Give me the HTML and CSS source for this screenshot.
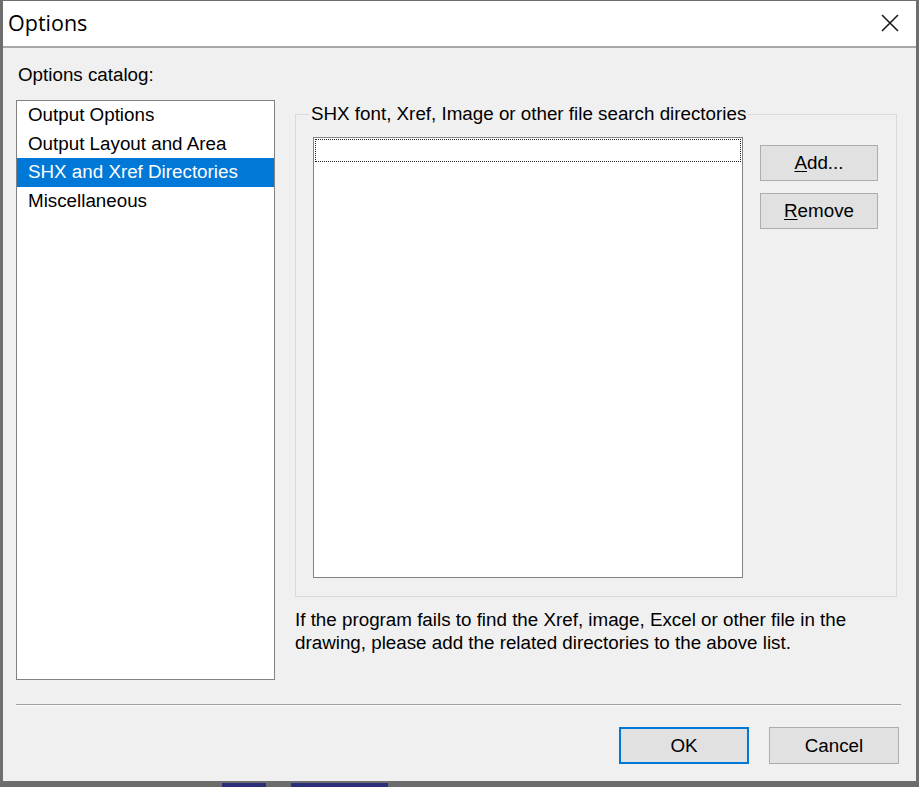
FILE: index.html
```html
<!DOCTYPE html>
<html>
<head>
<meta charset="utf-8">
<title>Options</title>
<link rel="stylesheet" href="styles.css">
</head>
<body>
<div class="window">
  <div class="titlebar">
    <span class="title">Options</span>
    <span class="close">
      <svg width="20" height="20" viewBox="0 0 20 20"><path d="M2 2 L18 18 M18 2 L2 18" stroke="#1a1a1a" stroke-width="1.6" fill="none"/></svg>
    </span>
  </div>
  <div class="content">
    <div class="main">
      <div class="left">
        <div class="label">Options catalog:</div>
        <ul class="catalog">
          <li class="item">Output Options</li>
          <li class="item">Output Layout and Area</li>
          <li class="item selected">SHX and Xref Directories</li>
          <li class="item">Miscellaneous</li>
        </ul>
      </div>
      <div class="right">
        <fieldset class="group">
          <legend class="legend">SHX font, Xref, Image or other file search directories</legend>
          <div class="group-body">
            <div class="dirlist"><div class="focusrow"></div></div>
            <div class="side-buttons">
              <button class="btn side"><u>A</u>dd...</button>
              <button class="btn side"><u>R</u>emove</button>
            </div>
          </div>
        </fieldset>
        <p class="info">If the program fails to find the Xref, image, Excel or other file in the<br>drawing, please add the related directories to the above list.</p>
      </div>
    </div>
    <div class="separator"></div>
    <div class="footer">
      <button class="btn footer-btn default">OK</button>
      <button class="btn footer-btn">Cancel</button>
    </div>
  </div>
</div>
<div class="taskbar">
  <span class="task t1"></span>
  <span class="task t2"></span>
</div>
</body>
</html>
```

FILE: styles.css
```css
html, body {
  margin: 0;
  padding: 0;
}

body {
  width: 919px;
  height: 787px;
  overflow: hidden;
  background: #6b6b6b;
  font-family: "Liberation Sans", Arial, sans-serif;
  font-size: 18.8px;
  color: #000;
}

.window {
  box-sizing: border-box;
  width: 919px;
  height: 783px;
  background: #f0f0f0;
  border-left: 3px solid #6e6e6e;
  border-right: 3px solid #6e6e6e;
  border-top: 1px solid #6e6e6e;
  border-bottom: 2px solid #6e6e6e;
  display: flex;
  flex-direction: column;
}

.titlebar {
  height: 45px;
  background: #fff;
  border-bottom: 2px solid #a8a8a8;
  display: flex;
  align-items: center;
  justify-content: space-between;
  padding: 0 16px 0 5px;
  flex: none;
}

.title {
  font-family: "Open Sans", "Noto Sans", sans-serif;
  font-size: 21.5px;
  line-height: 28px;
  color: #000;
  margin-top: -2px;
}

.close {
  display: flex;
  width: 20px;
  height: 20px;
  margin-top: -2px;
}

.content {
  flex: 1;
  display: flex;
  flex-direction: column;
  padding: 16px 15px 0 13px;
}

.main {
  display: flex;
  align-items: flex-start;
  gap: 20px;
}

.left {
  width: 259px;
  flex: none;
}

.label {
  line-height: 22px;
  margin-bottom: 14px;
  padding-left: 2px;
}

.catalog {
  box-sizing: border-box;
  list-style: none;
  margin: 0;
  padding: 0;
  width: 259px;
  height: 580px;
  background: #fff;
  border: 1px solid #828282;
}

.item {
  height: 28.6px;
  line-height: 28.6px;
  padding-left: 11px;
  white-space: nowrap;
}

.item.selected {
  background: #0078d7;
  color: #fff;
}

.right {
  width: 602px;
  flex: none;
}

.group {
  box-sizing: border-box;
  width: 602px;
  margin: 39px 0 0;
  padding: 12px 18px 18px 17px;
  border: 1px solid #dadada;
  min-width: 0;
}

.legend {
  padding: 0 2px;
  margin-left: -4px;
  line-height: 22px;
  white-space: nowrap;
}

.group-body {
  display: flex;
  align-items: flex-start;
}

.dirlist {
  box-sizing: border-box;
  width: 430px;
  height: 441px;
  background: #fff;
  border: 1px solid #828282;
  padding: 1px;
  flex: none;
}

.focusrow {
  height: 23px;
  border: 1px dotted #222;
  box-sizing: border-box;
}

.side-buttons {
  display: flex;
  flex-direction: column;
  gap: 12px;
  margin-left: 17px;
  margin-top: 8px;
}

.btn {
  box-sizing: border-box;
  font-family: "Liberation Sans", Arial, sans-serif;
  font-size: 18.8px;
  color: #000;
  background: #e1e1e1;
  border: 1px solid #adadad;
  padding: 0;
  margin: 0;
}

.btn.side {
  width: 118px;
  height: 36px;
}

.btn u {
  text-underline-offset: 2px;
}

.info {
  margin: 11px 0 0;
  line-height: 23px;
}

.separator {
  height: 0;
  border-top: 1px solid #a0a0a0;
  border-bottom: 1px solid #fcfcfc;
  margin-top: 24px;
}

.footer {
  display: flex;
  justify-content: flex-end;
  gap: 20px;
  margin-right: 2px;
  margin-top: 21px;
}

.footer-btn {
  width: 130px;
  height: 37px;
}

.footer-btn.default {
  border: 2px solid #0078d7;
}

.taskbar {
  height: 4px;
  background: #6b6b6b;
}

.task {
  display: inline-block;
  height: 4px;
  background: #2b2f7a;
  vertical-align: top;
}

.t1 {
  width: 44px;
  margin-left: 222px;
}

.t2 {
  width: 97px;
  margin-left: 20px;
}
```
